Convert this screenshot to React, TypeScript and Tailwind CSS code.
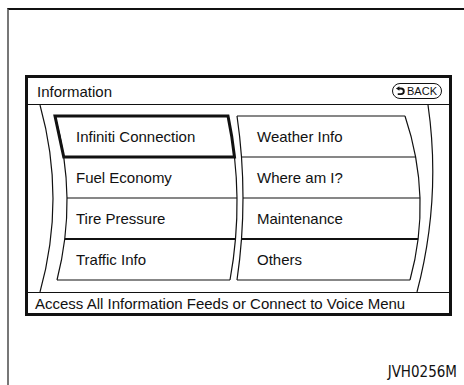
import React from "react";

// quadratic edge: x at top, control x, x at bottom; y runs 11 -> 93 -> 175 (list-area coords)
type Edge = [number, number, number];
const Y0 = 11;
const YC = 93;
const Y1 = 175;

const leftL: Edge = [27, 50, 29];
const leftR: Edge = [200, 217, 202];
const rightL: Edge = [209, 221, 209];
const rightR: Edge = [377, 404.5, 382];

const at = (e: Edge, t: number) => (1 - t) * (1 - t) * e[0] + 2 * (1 - t) * t * e[1] + t * t * e[2];
const yAt = (t: number) => (1 - t) * (1 - t) * Y0 + 2 * (1 - t) * t * YC + t * t * Y1;
// control point of the sub-curve between t0 and t1
const ctl = (a: number, c: number, b: number, t0: number, t1: number) =>
  (1 - t0) * (1 - t1) * a + ((1 - t0) * t1 + t0 * (1 - t1)) * c + t0 * t1 * b;

function edgePath(e: Edge, t0 = 0, t1 = 1) {
  return `M${at(e, t0)} ${yAt(t0)} Q${ctl(e[0], e[1], e[2], t0, t1)} ${ctl(Y0, YC, Y1, t0, t1)} ${at(e, t1)} ${yAt(t1)}`;
}

function Column({ l, r }: { l: Edge; r: Edge }) {
  const ts = [0, 0.25, 0.5, 0.75, 1];
  return (
    <g>
      <path d={edgePath(l)} />
      <path d={edgePath(r)} />
      {ts.map((t) => (
        <line key={t} x1={at(l, t)} y1={yAt(t)} x2={at(r, t)} y2={yAt(t)} strokeWidth={t === 0.75 ? 1.8 : 1.2} />
      ))}
    </g>
  );
}

function Carousel() {
  const sel = `M${at(leftL, 0)} ${Y0} L${at(leftR, 0)} ${Y0} ${edgePath(leftR, 0, 0.25).replace(/^M[^Q]+/, "")} L${at(leftL, 0.25)} ${yAt(0.25)} Z`;
  return (
    <svg className="absolute inset-0" width={421} height={187} viewBox="0 0 421 187" fill="none" stroke="#111" strokeWidth={1.2}>
      <path d="M12 0 Q38 93.5 12 187" />
      <path d="M400 0 Q413.5 93.5 389 187" />
      <Column l={leftL} r={leftR} />
      <Column l={rightL} r={rightR} />
      <path d={sel} strokeWidth={3} strokeLinejoin="miter" />
    </svg>
  );
}

function BackIcon() {
  return (
    <svg width="11" height="11" viewBox="0 0 14 14" fill="none">
      <path d="M5 3.2 H7.6 A3.6 3.6 0 0 1 7.6 10.4 H3.5" stroke="#111" strokeWidth="2.4" />
      <path d="M1.2 3.2 L5.6 0.2 L5.6 6.2 Z" fill="#111" />
    </svg>
  );
}

const left = ["Infiniti Connection", "Fuel Economy", "Tire Pressure", "Traffic Info"];
const right = ["Weather Info", "Where am I?", "Maintenance", "Others"];

export default function App() {
  return (
    <div className="h-[385px] w-[464px] overflow-hidden bg-white font-['Liberation_Sans',Arial,sans-serif] text-[#111]">
      <div className="ml-[7px] mt-[8px] flex h-[377px] flex-col border-l-2 border-t-2 border-l-[#777] border-t-[#111]">
        <div className="ml-[16px] mt-[65px] flex h-[241px] w-[427px] flex-col border-[3px] border-[#111]">
          <div className="flex h-[27px] shrink-0 items-center justify-between border-b border-[#111] pl-[9px] pr-[7px]">
            <span className="text-[15px] leading-none">Information</span>
            <span className="flex h-[16px] items-center gap-[1px] rounded-full border-[1.5px] border-[#111] pl-[2px] pr-[4px] text-[11px] leading-none">
              <BackIcon />
              BACK
            </span>
          </div>
          <div className="relative h-[187px] shrink-0">
            <Carousel />
            <div className="relative grid grid-flow-col grid-cols-[181px_1fr] grid-rows-[repeat(4,41px)] pl-[48px] pt-[11px] text-[15px] leading-none">
              {[...left, ...right].map((item) => (
                <div key={item} className="flex items-center">
                  {item}
                </div>
              ))}
            </div>
          </div>
          <div className="flex h-[21px] shrink-0 items-center border-t border-[#111] pl-[7px] text-[15px] leading-none">
            Access All Information Feeds or Connect to Voice Menu
          </div>
        </div>
        <div className="mt-[49px] flex justify-end pr-[7px]">
          <span className="font-['DejaVu_Sans_Condensed','DejaVu_Sans',sans-serif] text-[15px] leading-none">JVH0256M</span>
        </div>
      </div>
    </div>
  );
}
